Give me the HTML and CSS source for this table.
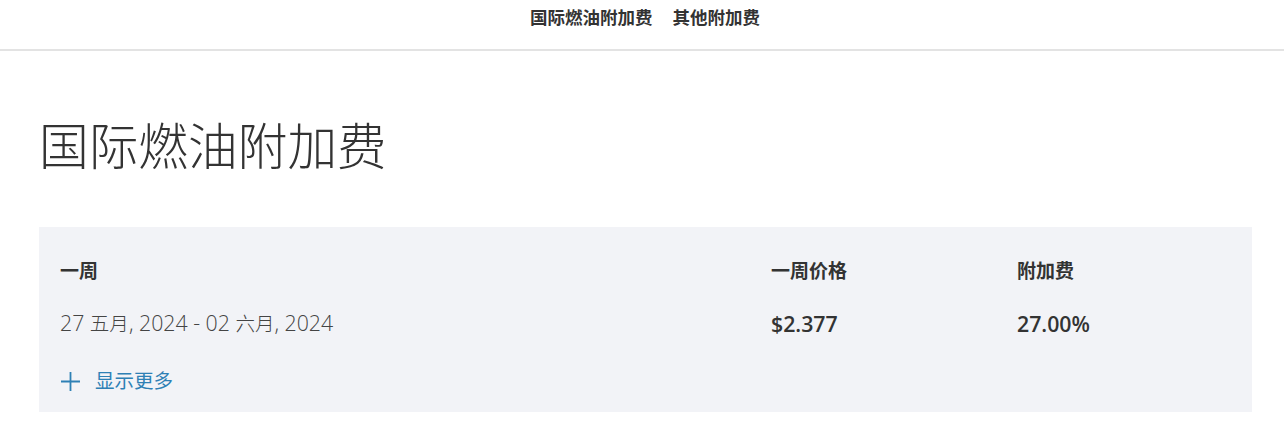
FILE: index.html
```html
<!DOCTYPE html>
<html lang="zh-CN">
<head>
<meta charset="utf-8">
<link rel="stylesheet" href="styles.css">
</head>
<body>
<nav class="topnav">
  <a class="navlink" href="#">国际燃油附加费</a>
  <a class="navlink" href="#">其他附加费</a>
</nav>
<main class="content">
  <h1 class="title">国际燃油附加费</h1>
  <section class="panel">
    <div class="row head">
      <div class="c1">一周</div>
      <div class="c2">一周价格</div>
      <div class="c3">附加费</div>
    </div>
    <div class="row data">
      <div class="c1 date">27 <span class="cjk">五月</span>, 2024 - 02 <span class="cjk">六月</span>, 2024</div>
      <div class="c2 num">$2.377</div>
      <div class="c3 num">27.00%</div>
    </div>
    <a class="more" href="#">
      <svg class="plus" width="21" height="21" viewBox="0 0 21 21"><path d="M10.5 1v19M1 10.5h19" stroke="currentColor" stroke-width="1.8" fill="none"/></svg>
      <span>显示更多</span>
    </a>
  </section>
</main>
</body>
</html>
```
FILE: styles.css
```css
* { box-sizing: border-box; }
body {
  margin: 0;
  background: #fff;
  color: #333;
  font-family: "Open Sans", "Noto Sans CJK SC", sans-serif;
}
.topnav {
  height: 51px;
  border-bottom: 2px solid #e3e3e3;
  display: flex;
  justify-content: center;
  gap: 20px;
  padding-top: 5px;
  padding-left: 6px;
}
.navlink {
  font-size: 17.5px;
  font-weight: 700;
  color: #333;
  text-decoration: none;
  line-height: 24px;
}
.content {
  padding: 0 32px 0 39px;
}
.title {
  margin: 63px 0 0 0;
  font-size: 49.7px;
  font-weight: 300;
  line-height: 64px;
  color: #333;
}
.panel {
  margin-top: 49px;
  background: #f2f3f7;
  width: 1213px;
  padding: 31px 21px 18px;
}
.row {
  display: grid;
  grid-template-columns: 711px 246px 1fr;
  align-items: center;
}
.head {
  font-size: 19px;
  font-weight: 700;
  line-height: 26px;
}
.data {
  margin-top: 26px;
  font-size: 21.3px;
  line-height: 26px;
}
.date {
  font-weight: 300;
  color: #444;
}
.cjk {
  font-size: 19.5px;
}
.num {
  font-weight: 600;
}
.more {
  margin-top: 31px;
  display: flex;
  align-items: center;
  gap: 14px;
  color: #2e80b5;
  text-decoration: none;
  font-size: 19.5px;
  line-height: 26px;
}
.plus { display: block; }
```
